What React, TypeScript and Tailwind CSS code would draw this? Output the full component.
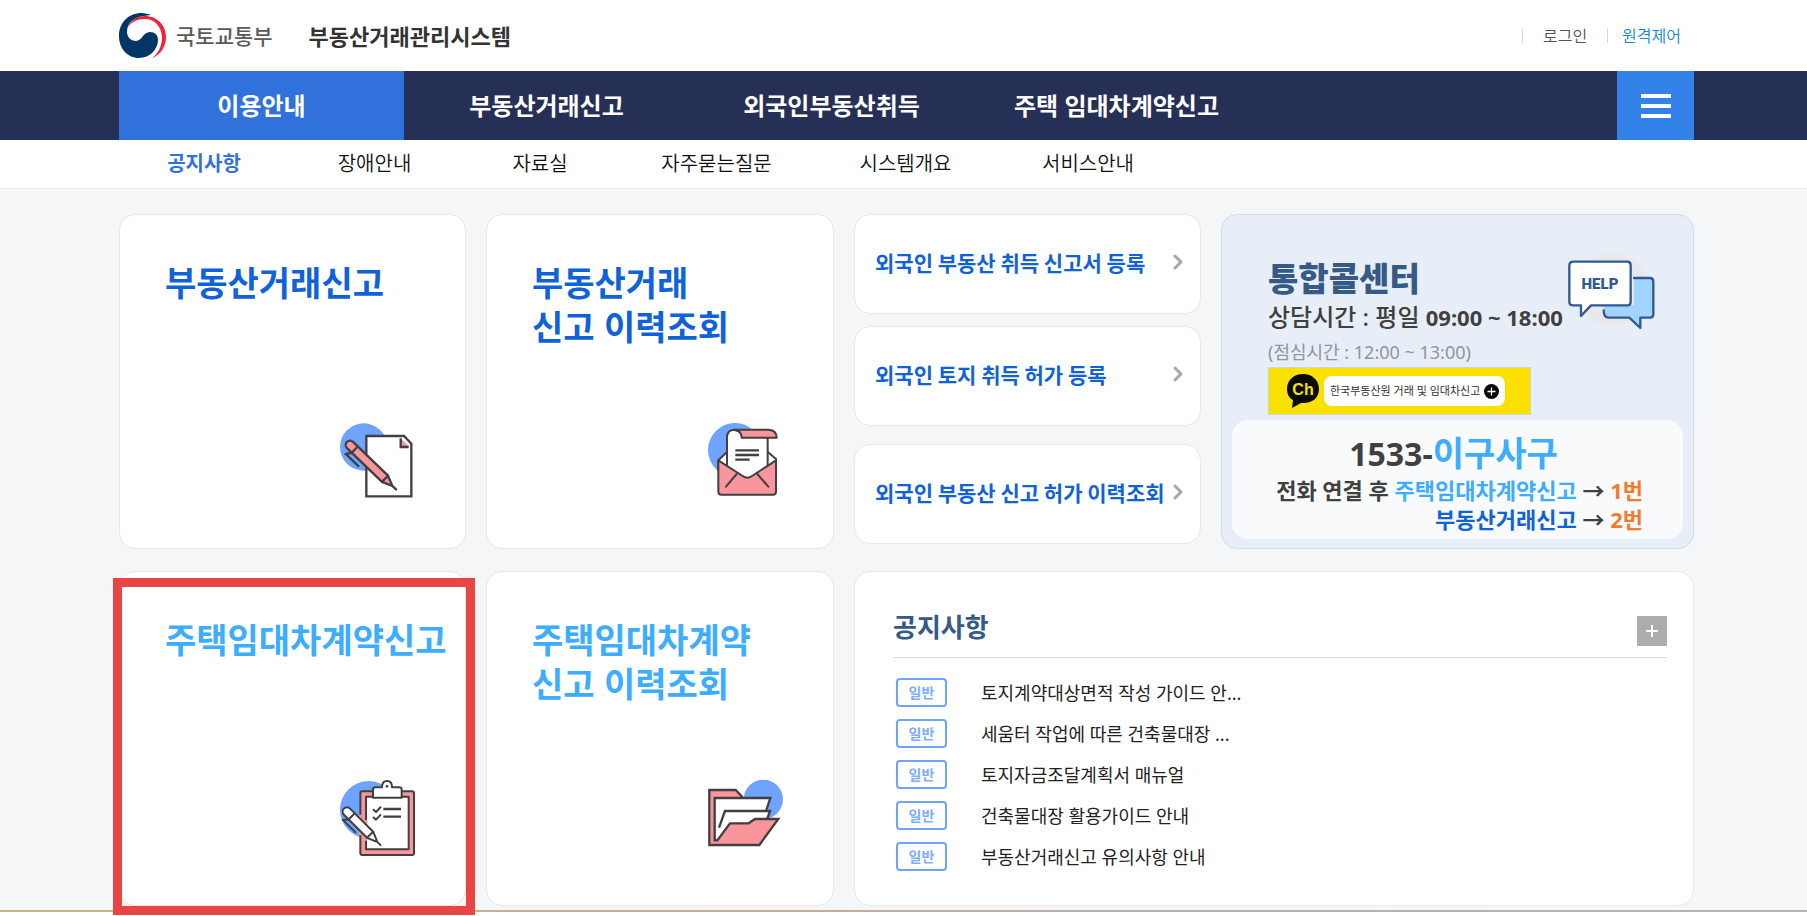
import type { ReactNode } from "react";
import { ChevronRight } from "lucide-react";

const MENU = ["이용안내", "부동산거래신고", "외국인부동산취득", "주택 임대차계약신고"];

const SUB_MENU = ["공지사항", "장애안내", "자료실", "자주묻는질문", "시스템개요", "서비스안내"];

const NOTICES = [
  "토지계약대상면적 작성 가이드 안...",
  "세움터 작업에 따른 건축물대장 ...",
  "토지자금조달계획서 매뉴얼",
  "건축물대장 활용가이드 안내",
  "부동산거래신고 유의사항 안내",
];

function GovLogo() {
  return (
    <svg viewBox="0 0 47 46" className="h-[46px] w-[47px]" aria-hidden="true">
      <path
        fill="#003764"
        d="M23 0C9 0 0 10 0 23c0 13 9 22 20 22 11 0 19-9 19-18 0-5-3-8-8-8-7 0-8 9-14 9-5 0-9-4-9-9C8 10 15 4 25 3l7-1c-3-1-6-2-9-2z"
      />
      <path
        fill="#f5203c"
        d="M9 15C11 8 17 3 26 3c12 0 21 9 21 21 0 10-6 18-14 21 6-4 10-12 10-20C43 13 35 6 26 6 18 6 12 9 9 15z"
      />
    </svg>
  );
}

function PenPaperIcon() {
  return (
    <svg viewBox="0 0 225 228" className="h-[76px] w-[75px]" fill="none" stroke="#404040" strokeWidth="7" aria-hidden="true">
      <circle cx="71" cy="72" r="71" fill="#6ea3ff" stroke="none" />
      <path d="M79 39H192L214 62V220H79z" fill="#fff" />
      <path d="M182 46V71H208z" fill="#fa959b" stroke="none" />
      <path d="M182 46V72H206" />
      <g transform="translate(30 66) rotate(44)" strokeLinecap="round" strokeLinejoin="round">
        <path d="M0-13H146L172-2V2L146 13H0A13 13 0 0 1 0-13z" fill="#fa959b" />
        <path d="M20-13V13M146-13V13M172 0H192" />
        <path d="M20 13L9 29M12 28H62" />
      </g>
    </svg>
  );
}

function EnvelopeIcon() {
  return (
    <svg viewBox="0 0 225 228" className="h-[76px] w-[75px]" fill="none" stroke="#404040" strokeWidth="6" strokeLinejoin="round" aria-hidden="true">
      <circle cx="81" cy="81" r="81" fill="#6ea3ff" stroke="none" />
      <path d="M31 112L60 84H176L204 108V140L118 180L31 140z" fill="#fff" />
      <path d="M57 145V42Q58 21 78 20L100 26L179 44V145L118 175z" fill="#fff" />
      <path d="M78 20H182Q206 22 206 44H101Q100 22 78 20z" fill="#fa959b" />
      <path d="M31 112L104 159Q118 169 132 159L204 112V206Q204 215 195 215H40Q31 215 31 206z" fill="#fa959b" />
      <path d="M86 153L54 191M148 153L181 191" strokeLinecap="round" />
      <path d="M82 82H153M82 96H153M82 110H125" strokeWidth="7" />
    </svg>
  );
}

function ClipboardIcon() {
  return (
    <svg viewBox="0 0 225 228" className="h-[76px] w-[75px]" fill="none" stroke="#404040" strokeWidth="6" strokeLinejoin="round" aria-hidden="true">
      <circle cx="86" cy="89" r="86" fill="#6ea3ff" stroke="none" />
      <rect x="61" y="34" width="161" height="191" rx="6" fill="#fa959b" />
      <rect x="78" y="50" width="128" height="158" fill="#fff" />
      <path d="M99 53V29Q99 22 106 22H126Q126 3 141 3T156 22H178Q185 22 185 29V53z" fill="#fff" />
      <circle cx="141" cy="19" r="4" fill="#404040" stroke="none" />
      <path d="M99 88L108 96L123 80M99 111L108 119L123 103" />
      <path d="M130 87H183M130 110H183" strokeWidth="7" />
      <path d="M61 104V166M78 120V182" stroke="#fa959b" strokeWidth="8" />
      <g transform="translate(21 95) rotate(45)" strokeLinecap="round">
        <path d="M0-13H98L124-2V2L98 13H0A13 13 0 0 1 0-13z" fill="#fff" />
        <path d="M20-13V13M98-13V13M124 0H142" />
        <path d="M20 13L8 27M10 26H62" />
      </g>
    </svg>
  );
}

function FolderIcon() {
  return (
    <svg viewBox="0 0 225 228" className="h-[76px] w-[75px]" fill="none" stroke="#404040" strokeWidth="7" aria-hidden="true">
      <circle cx="166" cy="58" r="59" fill="#6ea3ff" stroke="none" />
      <path d="M4 195V30H83L106 54V195z" fill="#fa959b" stroke="none" />
      <path d="M20 54H187L166 140L28 181H20z" fill="#fff" stroke="none" />
      <path d="M50 93H186L170 140L40 170z" fill="#fff" stroke="none" />
      <path d="M4 195L28 181L66 130H122L141 117H211L154 195z" fill="#fa959b" stroke="none" />
      <path d="M106 54L83 30H4V195H154L211 117H141L122 130H66L28 181H20V54H187L174 93" />
      <path d="M33 143L51 93H186L178 115" />
    </svg>
  );
}

function HelpIcon() {
  return (
    <svg viewBox="0 0 261 228" className="h-[76px] w-[87px] shrink-0" fill="none" stroke="#315a91" strokeWidth="7" strokeLinejoin="round" aria-hidden="true">
      <circle cx="133" cy="110" r="110" fill="#e9e9eb" stroke="none" />
      <path d="M198 75H246Q256 75 256 86V184Q256 194 246 194H217V225L184 194H122Q107 194 107 172V157H198z" fill="#a3d3ff" stroke="none" />
      <path d="M198 75H246Q256 75 256 86V184Q256 194 246 194H217V225L184 194H122Q107 194 107 172" strokeLinecap="round" />
      <path d="M16 26H178Q188 26 188 37V146Q188 157 178 157H69L39 189V157H16Q4 157 4 146V38Q4 26 16 26z" fill="#fff" />
      <text x="96" y="107" textAnchor="middle" fontSize="45" fontWeight="900" fontFamily="Roboto,sans-serif" fill="#315a91" stroke="none">
        HELP
      </text>
    </svg>
  );
}

function ChannelIcon() {
  return (
    <svg viewBox="0 0 32 35" className="h-[35px] w-8" aria-hidden="true">
      <path d="M16 0C7 0 0 6 0 15c0 5 2 9 6 11l-1 8 9-5C25 30 32 24 32 15 32 6 25 0 16 0z" fill="#0a0a0a" />
      <text x="16" y="21" textAnchor="middle" fontSize="16" fontWeight="700" fontFamily="'Liberation Sans',sans-serif" fill="#fae100">
        Ch
      </text>
    </svg>
  );
}

function ServiceCard({ children, icon, tone }: { children: ReactNode; icon: ReactNode; tone: string }) {
  return (
    <a
      href="#"
      className={`flex h-full flex-col justify-between rounded-2xl border border-[#e6e8ea] bg-white pt-[47px] pr-[50px] pb-[49px] pl-[45px] ${tone}`}
    >
      <span className="font-['Liberation_Sans','Noto_Sans_CJK_KR',sans-serif] text-[34px] leading-[44px] font-bold whitespace-nowrap">
        {children}
      </span>
      <span className="self-end">{icon}</span>
    </a>
  );
}

function ForeignerLink({ children }: { children: ReactNode }) {
  return (
    <a
      href="#"
      className="flex h-[100px] items-center justify-between rounded-2xl border border-[#e6e8ea] bg-white pr-[10px] pb-1 pl-5 font-['Noto_Sans_CJK_KR',sans-serif] text-[21px] leading-7 font-bold whitespace-nowrap text-[#0f62d9]"
    >
      {children}
      <ChevronRight className="size-6 shrink-0 text-[#a6a6a6]" strokeWidth={3} />
    </a>
  );
}

function CallCenter() {
  return (
    <section className="flex flex-col justify-between rounded-2xl border border-[#cfdcec] bg-[#e8eef7] px-[10px] pt-[38px] pb-[9px]">
      <div className="flex justify-between pr-7 pl-9">
        <div className="whitespace-nowrap">
          <h2 className="pt-[3px] text-[33px] leading-[45px] font-black text-[#345a85]">통합콜센터</h2>
          <p className="text-2xl leading-8 font-medium text-[#404040]">
            상담시간 : 평일 <b className="text-[22px]">09:00 ~ 18:00</b>
          </p>
          <p className="pt-1 text-lg leading-[30px] text-[#90959e]">(점심시간 : 12:00 ~ 13:00)</p>
          <a href="#" className="flex h-12 w-[263px] items-center border border-[#d3d3cf] bg-[#fae100] pl-[18px]">
            <ChannelIcon />
            <span className="ml-[5px] flex h-[30px] items-center gap-1 rounded-lg bg-white px-[6px] text-[11px] leading-4 text-[#333]">
              한국부동산원 거래 및 임대차신고
              <svg viewBox="0 0 15 15" className="size-[15px]" aria-hidden="true">
                <circle cx="7.5" cy="7.5" r="7.5" fill="#0a0a0a" />
                <path d="M7.5 3.5v8M3.5 7.5h8" stroke="#fff" strokeWidth="1.3" />
              </svg>
            </span>
          </a>
        </div>
        <HelpIcon />
      </div>
      <div className="rounded-2xl bg-[#f9fafc] pt-[11px] pb-[5px] font-bold whitespace-nowrap text-[#404040]">
        <p className="pr-2 text-center text-[32px] leading-[44px]">
          1533-<span className="text-[34px] text-[#3cadff]">이구사구</span>
        </p>
        <div className="pr-10 text-right text-[22px] leading-[29px]">
          <p>
            전화 연결 후 <span className="text-[#3cadff]">주택임대차계약신고</span> → <span className="text-[#f07d2e]">1번</span>
          </p>
          <p>
            <span className="text-[#0f62d9]">부동산거래신고</span> → <span className="text-[#f07d2e]">2번</span>
          </p>
        </div>
      </div>
    </section>
  );
}

function NoticeBoard() {
  return (
    <section className="col-span-2 rounded-2xl border border-[#e6e8ea] bg-white pt-[34px] pr-[26px] pl-[38px]">
      <div className="flex items-end justify-between border-b border-[#dcdedf] pb-[11px]">
        <h2 className="text-[26px] leading-[38px] font-bold text-[#345a85]">공지사항</h2>
        <button type="button" aria-label="공지사항 더보기" className="mt-[10px] flex size-[30px] items-center justify-center bg-[#adadad]">
          <svg viewBox="0 0 12 12" className="size-3" stroke="#fff" strokeWidth="2" aria-hidden="true">
            <path d="M6 0v12M0 6h12" />
          </svg>
        </button>
      </div>
      <ul className="flex flex-col gap-3 pt-5 pl-[3px]">
        {NOTICES.map((title) => (
          <li key={title} className="flex items-center gap-[34px]">
            <span className="flex h-[29px] w-[51px] items-center justify-center rounded border-2 border-[#6ea3ff] text-sm leading-5 font-bold text-[#7fadff]">
              일반
            </span>
            <a href="#" className="text-lg leading-7 text-[#222]">
              {title}
            </a>
          </li>
        ))}
      </ul>
    </section>
  );
}

export default function App() {
  return (
    <div className="min-h-screen bg-white font-['Noto_Sans','Noto_Sans_CJK_KR',sans-serif]">
      <header>
        <div className="flex h-[71px] items-center justify-between pr-[126px] pl-[119px]">
          <a href="#" className="flex items-center whitespace-nowrap">
            <GovLogo />
            <span className="ml-[10px] text-[21px] leading-8 font-medium text-[#5a5a5a]">국토교통부</span>
            <span className="ml-9 text-[22px] leading-8 font-bold text-[#333]">부동산거래관리시스템</span>
          </a>
          <div className="flex items-center text-base leading-6 font-[350]">
            <a href="#" className="flex items-center text-[#555]">
              <span className="mr-5 h-[15px] w-px bg-[#d9d9d9]" />
              로그인
            </a>
            <a href="#" className="ml-5 flex items-center text-[#1387d3]">
              <span className="mr-[14px] h-[15px] w-px bg-[#d9d9d9]" />
              원격제어
            </a>
          </div>
        </div>

        <nav className="flex h-[69px] bg-[#262f56] pr-[113px] pl-[119px]">
          {MENU.map((item, i) => (
            <a
              key={item}
              href="#"
              className={`flex w-[285px] items-center justify-center text-2xl font-bold whitespace-nowrap text-white ${i === 0 ? "bg-[#3071dc]" : ""}`}
            >
              {item}
            </a>
          ))}
          <button type="button" aria-label="전체메뉴" className="ml-auto flex w-[77px] flex-col items-center justify-center gap-[6px] bg-[#3282ea]">
            <span className="h-1 w-[30px] bg-white" />
            <span className="h-1 w-[30px] bg-white" />
            <span className="h-1 w-[30px] bg-white" />
          </button>
        </nav>

        <nav className="grid h-[49px] grid-cols-[170px_171px_160px_193px_185px_180px] items-center border-b border-[#eaecee] pl-[119px] text-center text-xl leading-7 text-[#111]">
          {SUB_MENU.map((item, i) => (
            <a key={item} href="#" className={i === 0 ? "font-bold text-[#3071dc]" : "font-[350]"}>
              {item}
            </a>
          ))}
        </nav>
      </header>

      <main className="grid grid-cols-[minmax(0,347fr)_minmax(0,348fr)_minmax(0,347fr)_minmax(0,473fr)] grid-rows-[335px_335px] gap-x-5 gap-y-[22px] bg-[#f5f6f8] pt-[25px] pr-[113px] pb-1 pl-[119px]">
        <ServiceCard tone="text-[#0f62d9]" icon={<PenPaperIcon />}>
          부동산거래신고
        </ServiceCard>
        <ServiceCard tone="text-[#0f62d9]" icon={<EnvelopeIcon />}>
          부동산거래
          <br />
          신고 이력조회
        </ServiceCard>
        <div className="flex flex-col">
          <ForeignerLink>외국인 부동산 취득 신고서 등록</ForeignerLink>
          <div className="mt-3 mb-[18px]">
            <ForeignerLink>외국인 토지 취득 허가 등록</ForeignerLink>
          </div>
          <ForeignerLink>외국인 부동산 신고 허가 이력조회</ForeignerLink>
        </div>
        <CallCenter />

        <div className="relative">
          <ServiceCard tone="text-[#3cadff]" icon={<ClipboardIcon />}>
            주택임대차계약신고
          </ServiceCard>
          {/* highlight frame around the lease report card */}
          <div className="pointer-events-none absolute top-[7px] -right-[9px] -bottom-[9px] -left-[6px] border-[9px] border-[#e94545]" />
        </div>
        <ServiceCard tone="text-[#3cadff]" icon={<FolderIcon />}>
          주택임대차계약
          <br />
          신고 이력조회
        </ServiceCard>
        <NoticeBoard />
      </main>
      <footer className="h-[2px] bg-linear-to-r from-[#c9b48c] via-[#bfaea2] to-[#b4b6b8]" />
    </div>
  );
}
